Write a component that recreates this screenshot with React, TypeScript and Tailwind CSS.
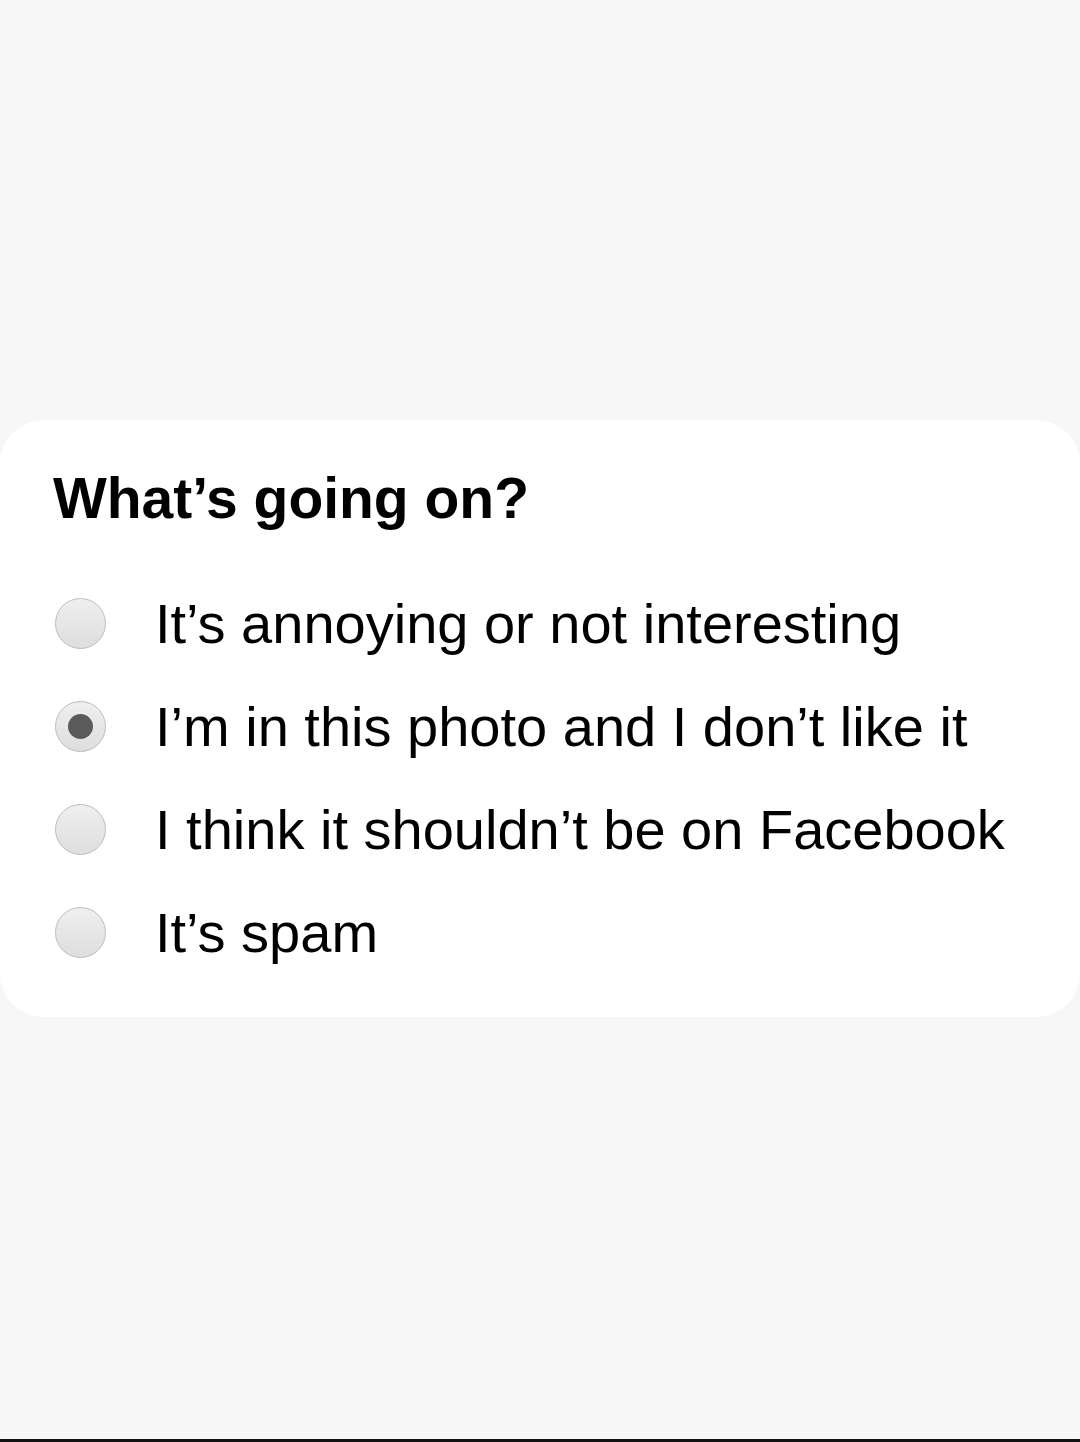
import React from 'react';

const options = [
  { label: 'It’s annoying or not interesting', checked: false },
  { label: 'I’m in this photo and I don’t like it', checked: true },
  { label: 'I think it shouldn’t be on Facebook', checked: false },
  { label: 'It’s spam', checked: false },
];

const Radio: React.FC<{ checked: boolean }> = ({ checked }) => (
  <span className="flex h-[51px] w-[51px] shrink-0 items-center justify-center rounded-full border-[1.5px] border-[#bdbdbd] bg-gradient-to-b from-[#efefef] to-[#dedede]">
    {checked && <span className="h-[25px] w-[25px] rounded-full bg-[#5a5a5a]" />}
  </span>
);

export default function App() {
  return (
    <div
      className="flex h-[1442px] w-full flex-col bg-[#f7f7f7] text-black"
      style={{ fontFamily: '"Liberation Sans", Arial, sans-serif' }}
    >
      <div className="pt-[420px]">
        <div className="rounded-[44px] bg-white pb-[33px] pl-[53px] pt-[48px]">
          <h2 className="text-[57px] font-bold leading-[60px]">What’s going on?</h2>
          <div className="mt-[44px] flex flex-col">
            {options.map((o) => (
              <label key={o.label} className="flex h-[103px] items-center">
                <span className="ml-[2px]">
                  <Radio checked={o.checked} />
                </span>
                <span className="ml-[49px] text-[56px] leading-[60px]">{o.label}</span>
              </label>
            ))}
          </div>
        </div>
      </div>
      <div className="flex-1" />
      <div className="h-[3px] bg-[#111111]" />
    </div>
  );
}
